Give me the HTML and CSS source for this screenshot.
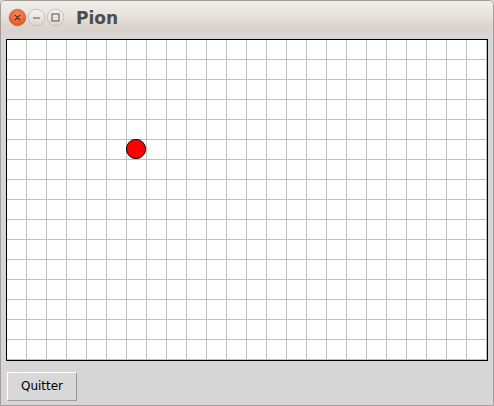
FILE: index.html
```html
<!DOCTYPE html>
<html>
<head>
<meta charset="utf-8">
<link rel="stylesheet" href="styles.css">
</head>
<body>
<div class="window">
  <div class="titlebar">
    <div class="controls">
      <svg class="ctl" width="19" height="19" viewBox="0 0 19 19">
        <defs>
          <radialGradient id="g-close" cx="50%" cy="35%" r="65%">
            <stop offset="0" stop-color="#f7905e"/>
            <stop offset="1" stop-color="#e0531f"/>
          </radialGradient>
        </defs>
        <circle cx="9.5" cy="9.5" r="8.3" fill="url(#g-close)" stroke="#c9643a" stroke-width="0.8"/>
        <path d="M7.1 7.1 L11.9 11.9 M11.9 7.1 L7.1 11.9" stroke="#5a2a16" stroke-width="1.2" stroke-linecap="round"/>
      </svg>
      <svg class="ctl" width="19" height="19" viewBox="0 0 19 19">
        <defs>
          <linearGradient id="g-btn" x1="0" y1="0" x2="0" y2="1">
            <stop offset="0" stop-color="#f6f4f2"/>
            <stop offset="1" stop-color="#d9d4cf"/>
          </linearGradient>
        </defs>
        <circle cx="9.5" cy="9.5" r="8.3" fill="url(#g-btn)" stroke="#bcb6b0" stroke-width="0.8"/>
        <path d="M6 10 H13" stroke="#55524f" stroke-width="1.1"/>
      </svg>
      <svg class="ctl" width="19" height="19" viewBox="0 0 19 19">
        <circle cx="9.5" cy="9.5" r="8.3" fill="url(#g-btn)" stroke="#bcb6b0" stroke-width="0.8"/>
        <rect x="6" y="6" width="7" height="7" fill="none" stroke="#55524f" stroke-width="1"/>
      </svg>
    </div>
    <div class="title">Pion</div>
  </div>
  <div class="content">
    <div class="board">
      <svg class="pawn" width="22" height="22" viewBox="0 0 22 22">
        <circle cx="11" cy="11" r="9.6" fill="#ff0000" stroke="#000" stroke-width="1"/>
      </svg>
    </div>
    <div class="actions">
      <button class="btn">Quitter</button>
    </div>
  </div>
</div>
</body>
</html>
```

FILE: styles.css
```css
html, body {
  margin: 0;
  padding: 0;
  background: #d6d6d6;
}

.window {
  width: 494px;
  height: 406px;
  box-sizing: border-box;
  border: 1px solid #a39d97;
  border-radius: 5px 5px 0 0;
  background: #d6d6d6;
  display: flex;
  flex-direction: column;
  overflow: hidden;
}

.titlebar {
  height: 32px;
  flex: none;
  display: flex;
  align-items: center;
  background: linear-gradient(to bottom, #f0eeea 0%, #e8e5e1 40%, #dcd5cf 75%, #d9d2cc 100%);
}

.controls {
  display: flex;
  align-items: center;
  gap: 0;
  margin-left: 7px;
  margin-top: 1px;
}

.ctl {
  display: block;
}

.title {
  margin-left: 11px;
  margin-top: 1px;
  font-family: "DejaVu Sans", "Liberation Sans", sans-serif;
  font-weight: bold;
  font-size: 17px;
  color: #4f4d4a;
}

.content {
  flex: 1;
  display: flex;
  flex-direction: column;
  padding: 6px 5px 0 5px;
}

.board {
  position: relative;
  width: 480px;
  height: 320px;
  border: 1px solid #000;
  background-color: #ffffff;
  background-image:
    linear-gradient(to right, #c0c0c0 1px, transparent 1px),
    linear-gradient(to bottom, #c0c0c0 1px, transparent 1px);
  background-size: 20px 20px;
  background-position: 19px 19px;
}

.pawn {
  position: absolute;
  left: 118px;
  top: 98px;
  display: block;
}

.actions {
  display: flex;
  padding-top: 11px;
  padding-left: 1px;
}

.btn {
  width: 70px;
  height: 29px;
  margin: 0;
  padding: 0 0 1px 0;
  box-sizing: border-box;
  background: #d8d8d8;
  border-top: 1px solid #ffffff;
  border-left: 1px solid #ffffff;
  border-right: 1px solid #9a9a9a;
  border-bottom: 1px solid #9a9a9a;
  border-radius: 0;
  font-family: "DejaVu Sans", "Liberation Sans", sans-serif;
  font-size: 12px;
  color: #000;
}
```
